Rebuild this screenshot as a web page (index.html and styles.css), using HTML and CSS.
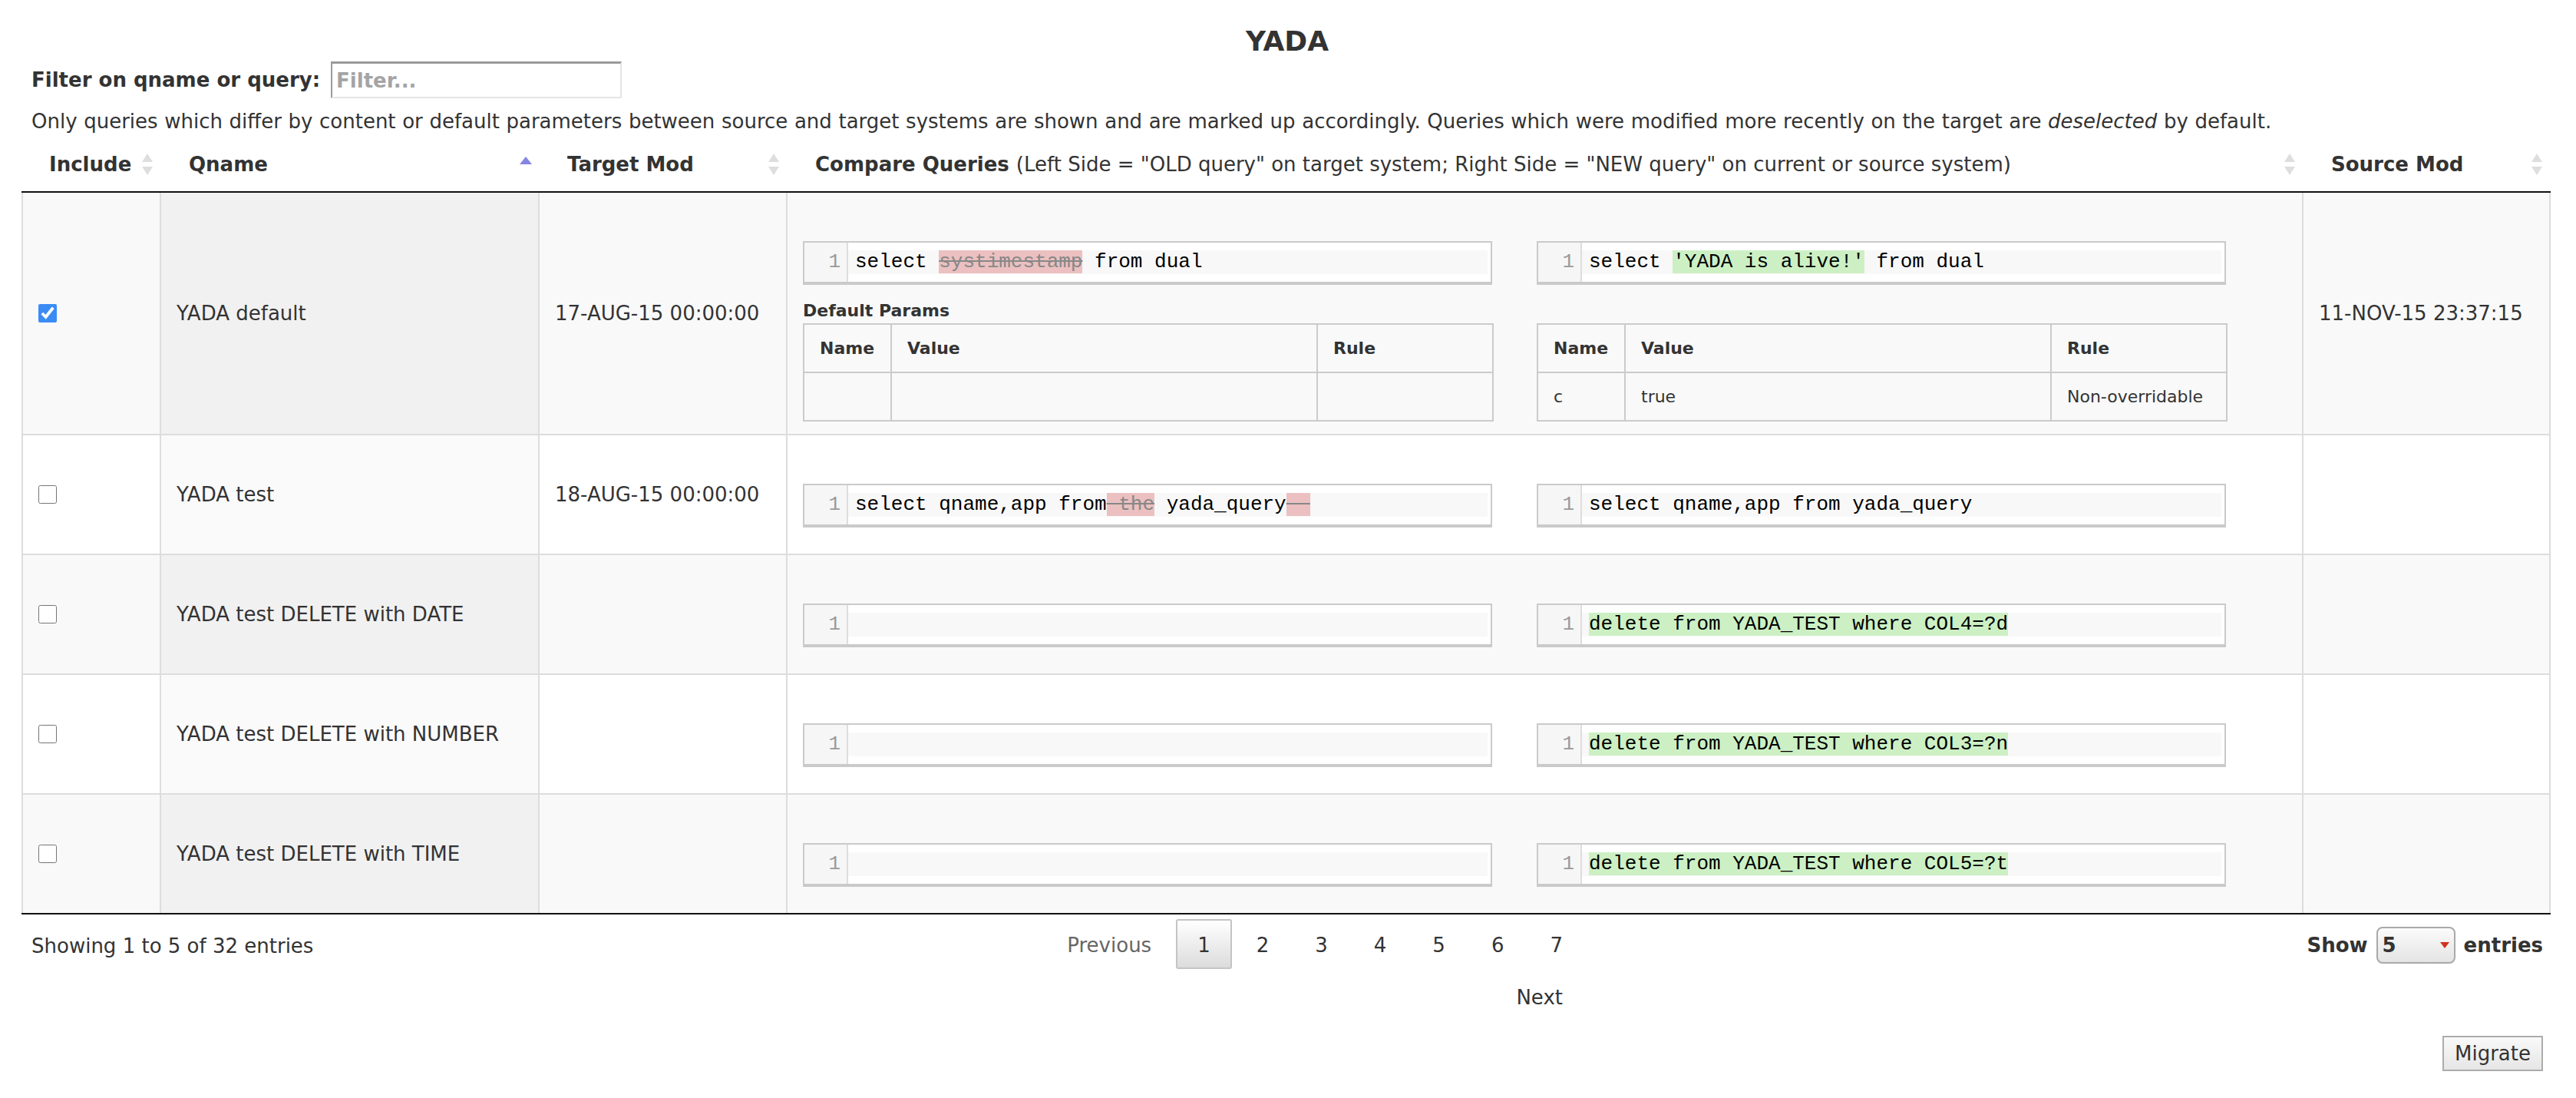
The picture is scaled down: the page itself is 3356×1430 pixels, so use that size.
FILE: index.html
```html
<!DOCTYPE html>
<html lang="en">
<head>
<meta charset="utf-8">
<title>YADA</title>
<link rel="stylesheet" href="styles.css">
</head>
<body>
<div class="page">
  <h1 class="title">YADA</h1>
  <div class="filter">
    <label class="filter-label" for="filter">Filter on qname or query:</label>
    <input id="filter" class="filter-input" type="text" placeholder="Filter...">
  </div>
  <p class="note">Only queries which differ by content or default parameters between source and target systems are shown and are marked up accordingly. Queries which were modified more recently on the target are <em>deselected</em> by default.</p>

  <div class="grid-wrap">
    <table class="grid">
      <colgroup>
        <col class="c-include">
        <col class="c-qname">
        <col class="c-target">
        <col class="c-compare">
        <col class="c-source">
      </colgroup>
      <thead>
        <tr>
          <th>Include<svg class="sort" width="18" height="30" viewBox="0 0 18 30"><path d="M9 1L16 12H2Z M9 29L16 18H2Z" fill="#dedede"/></svg></th>
          <th>Qname<svg class="sort" width="18" height="30" viewBox="0 0 18 30"><path d="M9 5L17 15H1Z" fill="#8585e4"/></svg></th>
          <th>Target Mod<svg class="sort" width="18" height="30" viewBox="0 0 18 30"><path d="M9 1L16 12H2Z M9 29L16 18H2Z" fill="#dedede"/></svg></th>
          <th><b>Compare Queries</b> <span class="plain">(Left Side = "OLD query" on target system; Right Side = "NEW query" on current or source system)</span><svg class="sort" width="18" height="30" viewBox="0 0 18 30"><path d="M9 1L16 12H2Z M9 29L16 18H2Z" fill="#dedede"/></svg></th>
          <th>Source Mod<svg class="sort" width="18" height="30" viewBox="0 0 18 30"><path d="M9 1L16 12H2Z M9 29L16 18H2Z" fill="#dedede"/></svg></th>
        </tr>
      </thead>
      <tbody>
        <tr class="odd">
          <td><input class="chk" type="checkbox" checked></td>
          <td class="sorted">YADA default</td>
          <td>17-AUG-15 00:00:00</td>
          <td>
            <div class="diff has-params">
              <div class="cm"><div class="gutter">1</div><div class="code"><div class="line">select <span class="del">systimestamp</span> from dual</div></div></div>
              <div class="cm"><div class="gutter">1</div><div class="code"><div class="line">select <span class="ins">'YADA is alive!'</span> from dual</div></div></div>
              <div class="params-label">Default Params</div>
              <div class="params-label"></div>
              <table class="params">
                <colgroup><col class="p-name"><col class="p-value"><col class="p-rule"></colgroup>
                <thead><tr><th>Name</th><th>Value</th><th>Rule</th></tr></thead>
                <tbody><tr><td></td><td></td><td></td></tr></tbody>
              </table>
              <table class="params">
                <colgroup><col class="p-name"><col class="p-value"><col class="p-rule"></colgroup>
                <thead><tr><th>Name</th><th>Value</th><th>Rule</th></tr></thead>
                <tbody><tr><td>c</td><td>true</td><td>Non-overridable</td></tr></tbody>
              </table>
            </div>
          </td>
          <td>11-NOV-15 23:37:15</td>
        </tr>
        <tr class="even">
          <td><input class="chk" type="checkbox"></td>
          <td class="sorted">YADA test</td>
          <td>18-AUG-15 00:00:00</td>
          <td>
            <div class="diff">
              <div class="cm"><div class="gutter">1</div><div class="code"><div class="line">select qname,app from<span class="del"> the</span> yada_query<span class="del">  </span></div></div></div>
              <div class="cm"><div class="gutter">1</div><div class="code"><div class="line">select qname,app from yada_query</div></div></div>
            </div>
          </td>
          <td></td>
        </tr>
        <tr class="odd">
          <td><input class="chk" type="checkbox"></td>
          <td class="sorted">YADA test DELETE with DATE</td>
          <td></td>
          <td>
            <div class="diff">
              <div class="cm"><div class="gutter">1</div><div class="code"><div class="line"></div></div></div>
              <div class="cm"><div class="gutter">1</div><div class="code"><div class="line"><span class="ins">delete from YADA_TEST where COL4=?d</span></div></div></div>
            </div>
          </td>
          <td></td>
        </tr>
        <tr class="even">
          <td><input class="chk" type="checkbox"></td>
          <td class="sorted">YADA test DELETE with NUMBER</td>
          <td></td>
          <td>
            <div class="diff">
              <div class="cm"><div class="gutter">1</div><div class="code"><div class="line"></div></div></div>
              <div class="cm"><div class="gutter">1</div><div class="code"><div class="line"><span class="ins">delete from YADA_TEST where COL3=?n</span></div></div></div>
            </div>
          </td>
          <td></td>
        </tr>
        <tr class="odd">
          <td><input class="chk" type="checkbox"></td>
          <td class="sorted">YADA test DELETE with TIME</td>
          <td></td>
          <td>
            <div class="diff">
              <div class="cm"><div class="gutter">1</div><div class="code"><div class="line"></div></div></div>
              <div class="cm"><div class="gutter">1</div><div class="code"><div class="line"><span class="ins">delete from YADA_TEST where COL5=?t</span></div></div></div>
            </div>
          </td>
          <td></td>
        </tr>
      </tbody>
    </table>
  </div>

  <div class="footer">
    <div class="info">Showing 1 to 5 of 32 entries</div>
    <div class="paginate">
      <span class="pb disabled">Previous</span>
      <span class="pb current">1</span>
      <span class="pb">2</span>
      <span class="pb">3</span>
      <span class="pb">4</span>
      <span class="pb">5</span>
      <span class="pb">6</span>
      <span class="pb">7</span>
      <span class="pb">Next</span>
    </div>
    <div class="length">
      <span>Show</span>
      <span class="select-wrap"><select class="len-select"><option>5</option><option>10</option><option>25</option></select><span class="select-arrow"></span></span>
      <span>entries</span>
    </div>
  </div>

  <div class="actions">
    <button class="migrate" type="button">Migrate</button>
  </div>
</div>
</body>
</html>
```
FILE: styles.css
```css
* { box-sizing: border-box; }

html, body {
  margin: 0;
  background: #fff;
}

body {
  font-family: "DejaVu Sans", Verdana, sans-serif;
  font-size: 26px;
  color: #333;
}

.page {
  padding: 33px 43px 40px 41px;
}

.title {
  margin: 0;
  font-size: 36px;
  line-height: 42px;
  font-weight: bold;
  text-align: center;
}

.filter {
  display: flex;
  align-items: center;
  gap: 14px;
  height: 48px;
  margin-top: 5px;
}

.filter-label {
  font-weight: bold;
}

.filter-input {
  width: 379px;
  height: 48px;
  border: 2px solid;
  border-color: #9a9a9a #e4e4e4 #e4e4e4 #9a9a9a;
  border-top-width: 3px;
  padding: 0 5px;
  font-family: "DejaVu Sans", Verdana, sans-serif;
  font-size: 26px;
  font-weight: bold;
  color: #333;
  background: #fff;
}

.filter-input::placeholder {
  color: #a4a4a4;
}

.note {
  margin: 15px 0 0;
  line-height: 30px;
  word-spacing: 0.35px;
}

.grid-wrap {
  margin: 6px -10px 0 -13px;
}

.grid {
  width: 100%;
  table-layout: fixed;
  border-collapse: separate;
  border-spacing: 0;
  border-bottom: 2px solid #111;
}

.c-include { width: 182px; }
.c-qname { width: 493px; }
.c-target { width: 323px; }
.c-compare { width: 1975px; }
.c-source { width: 322px; }

.grid > thead > tr > th {
  position: relative;
  text-align: left;
  font-weight: bold;
  padding: 20px 36px;
  line-height: 30px;
  border-bottom: 2px solid #111;
  white-space: nowrap;
}

.grid .plain {
  font-weight: normal;
}

.sort {
  position: absolute;
  right: 9px;
  top: 50%;
  margin-top: -15px;
}

.grid > tbody > tr > td {
  padding: 16px 20px;
  line-height: 30px;
  vertical-align: middle;
  border-top: 2px solid #ddd;
  border-right: 2px solid #ddd;
  white-space: nowrap;
}

.grid > tbody > tr > td:first-child {
  border-left: 2px solid #ddd;
}

.grid > tbody > tr:first-child > td {
  border-top: none;
}

.grid > tbody > tr.odd > td { background: #f9f9f9; }
.grid > tbody > tr.odd > td.sorted { background: #f1f1f1; }
.grid > tbody > tr.even > td { background: #fff; }
.grid > tbody > tr.even > td.sorted { background: #fafafa; }

.chk {
  display: block;
  width: 24px;
  height: 24px;
  margin: 0;
  accent-color: #3a8cf4;
}

.diff {
  display: grid;
  grid-template-columns: 898px 898px;
  column-gap: 58px;
  padding: 47px 0 18px;
}

.diff.has-params {
  padding-bottom: 0;
}

.cm {
  display: flex;
  height: 57px;
  border: 2px solid #cacaca;
  border-bottom-width: 4px;
  background: #fff;
  font-family: "Liberation Mono", "DejaVu Sans Mono", monospace;
  font-size: 26px;
}

.gutter {
  width: 57px;
  flex: none;
  background: #f6f6f6;
  border-right: 2px solid #ddd;
  color: #999;
  text-align: right;
  padding: 10px 8px 0 0;
  line-height: 31px;
}

.code {
  flex: 1;
  padding: 10px 4px 0 0;
}

.line {
  height: 31px;
  line-height: 31px;
  background: #f8f8f8;
  padding-left: 9px;
  color: #000;
  white-space: pre;
}

.del {
  background: #ecc0c0;
  color: #888;
  text-decoration: line-through;
}

.ins {
  background: #ccf0c4;
}

.params-label {
  margin: 21px 0 3px;
  height: 26px;
  line-height: 26px;
  font-size: 22px;
  font-weight: bold;
}

.params {
  width: 898px;
  table-layout: fixed;
  border-collapse: collapse;
  font-size: 22px;
}

.p-name { width: 114px; }
.p-value { width: 555px; }
.p-rule { width: 229px; }

.params th,
.params td {
  border: 2px solid #cbcbcb;
  height: 63px;
  padding: 0 20px;
  line-height: 26px;
  text-align: left;
  vertical-align: middle;
  background: transparent;
}

.params th {
  font-weight: bold;
}

.footer {
  display: grid;
  grid-template-columns: 1315px 708px 1fr;
  align-items: start;
}

.info {
  padding-top: 26px;
  line-height: 30px;
}

.paginate {
  display: flex;
  flex-wrap: wrap;
  justify-content: flex-end;
  row-gap: 3px;
  padding-top: 6px;
}

.pb {
  margin-left: 4px;
  padding: 15px 26px 11px;
  line-height: 35px;
  border: 2px solid transparent;
  border-radius: 3px;
  color: #333;
}

.pb.disabled {
  color: #666;
}

.pb.current {
  border-color: #c4c4c4;
  background: linear-gradient(to bottom, #ffffff 0%, #dcdcdc 100%);
}

.length {
  display: flex;
  justify-content: flex-end;
  align-items: center;
  gap: 11px;
  margin-top: 16px;
  height: 48px;
  font-weight: bold;
}

.select-wrap {
  position: relative;
  display: block;
  width: 103px;
  height: 48px;
}

.len-select {
  appearance: none;
  -webkit-appearance: none;
  width: 103px;
  height: 48px;
  margin: 0;
  padding: 0 0 0 6px;
  border: 2px solid #a9a9a9;
  border-radius: 8px;
  background: linear-gradient(to bottom, #fbfbfb 0%, #e4e4e4 100%);
  font-family: "DejaVu Sans", Verdana, sans-serif;
  font-size: 26px;
  font-weight: bold;
  color: #333;
}

.select-arrow {
  position: absolute;
  right: 8px;
  top: 20px;
  width: 0;
  height: 0;
  border-left: 6px solid transparent;
  border-right: 6px solid transparent;
  border-top: 8px solid #d0321c;
}

.actions {
  display: flex;
  justify-content: flex-end;
  margin-top: 19px;
}

.migrate {
  height: 46px;
  padding: 0 14px;
  border: 2px solid #acacac;
  background: linear-gradient(to bottom, #f9f9f9 0%, #e6e6e6 100%);
  font-family: "DejaVu Sans", Verdana, sans-serif;
  font-size: 26px;
  line-height: 30px;
  color: #333;
}
```
